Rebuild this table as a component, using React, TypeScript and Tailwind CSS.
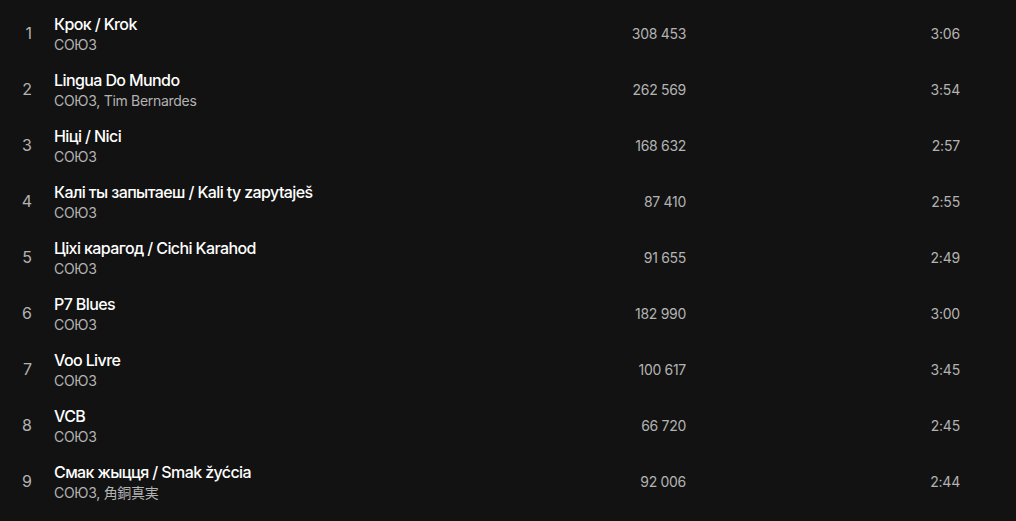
import React from "react";

const tracks = [
  { title: "Крок / Krok", artists: "СОЮЗ", plays: "308 453", dur: "3:06" },
  { title: "Lingua Do Mundo", artists: "СОЮЗ, Tim Bernardes", plays: "262 569", dur: "3:54" },
  { title: "Ніці / Nici", artists: "СОЮЗ", plays: "168 632", dur: "2:57" },
  { title: "Калі ты запытаеш / Kali ty zapytaješ", artists: "СОЮЗ", plays: "87 410", dur: "2:55" },
  { title: "Ціхі карагод / Cichi Karahod", artists: "СОЮЗ", plays: "91 655", dur: "2:49" },
  { title: "P7 Blues", artists: "СОЮЗ", plays: "182 990", dur: "3:00" },
  { title: "Voo Livre", artists: "СОЮЗ", plays: "100 617", dur: "3:45" },
  { title: "VCB", artists: "СОЮЗ", plays: "66 720", dur: "2:45" },
  { title: "Смак жыцця / Smak žyćcia", artists: "СОЮЗ, 角銅真実", plays: "92 006", dur: "2:44" },
];

export default function App() {
  return (
    <div
      className="w-[1016px] h-[521px] overflow-hidden bg-[#121212] pt-[5px]"
      style={{ fontFamily: '"Inter", "Noto Sans CJK JP", sans-serif' }}
    >
      {tracks.map((t, i) => (
        <div key={i} className="flex items-center h-[56px] pl-4 pr-[56px]">
          <div className="w-4 text-right text-[16px] text-[#b3b3b3]">{i + 1}</div>
          <div className="ml-[22px] flex-1 flex flex-col pt-[2px]">
            <div className="text-[16px] leading-[22px] font-medium text-white tracking-[-0.6px]">{t.title}</div>
            <div className="text-[14px] leading-[20px] text-[#b3b3b3] tracking-[-0.3px]">{t.artists}</div>
          </div>
          <div className="w-[100px] text-right text-[14px] text-[#b3b3b3] tracking-[-0.3px]">{t.plays}</div>
          <div className="w-[274px] text-right text-[14px] text-[#b3b3b3] tracking-[-0.2px]">{t.dur}</div>
        </div>
      ))}
    </div>
  );
}
